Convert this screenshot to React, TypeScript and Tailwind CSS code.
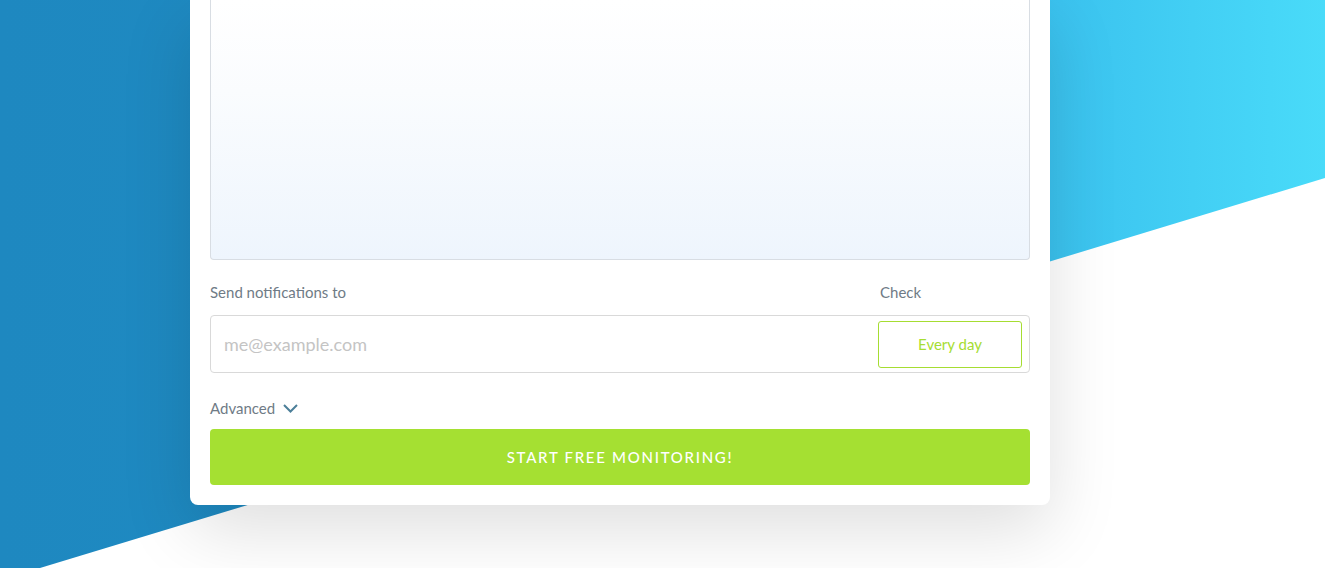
import React from "react";

export default function App() {
  return (
    <div className="relative h-[568px] w-full overflow-hidden bg-white font-['Lato','Open_Sans',sans-serif]">
      <div className="absolute inset-0 bg-[linear-gradient(90deg,#1e88c0_0%,#1f8cc3_40%,#3bc3ef_80%,#49dbf9_100%)] [clip-path:polygon(0_0,100%_0,100%_178px,40px_568px,0_568px)]" />
      <div className="relative ml-[190px] w-[860px] rounded-b-[8px] bg-white px-5 pb-5 shadow-[0_25px_70px_rgba(0,0,0,0.13)]">
        <div className="h-[260px] rounded-b-[4px] border border-t-0 border-[#d8dde3] bg-[linear-gradient(180deg,#ffffff_0%,#fafcfe_35%,#eef5fd_100%)]" />
        <div className="mt-[22px] flex text-[15px] leading-[20px] text-[#6f7b86]">
          <div className="flex-1">Send notifications to</div>
          <div className="w-[150px]">Check</div>
        </div>
        <div className="mt-[13px] flex h-[58px] items-center rounded-[4px] border border-[#d9d9d9] pr-[7px] pl-[13px]">
          <div className="flex-1 text-[18px] text-[#c4c4c4]">me@example.com</div>
          <div className="flex h-[47px] w-[144px] items-center justify-center rounded-[3px] border border-[#a6dd32] text-[15px] text-[#a6dd32]">
            Every day
          </div>
        </div>
        <div className="mt-[25px] flex items-center gap-[8px] text-[15px] leading-[20px] text-[#6f7b86]">
          <span>Advanced</span>
          <svg width="15" height="9" viewBox="0 0 15 9" fill="none">
            <polyline points="1,1 7.5,7.5 14,1" stroke="#4c7f99" strokeWidth="2" />
          </svg>
        </div>
        <button className="mt-[11px] flex h-[56px] w-full items-center justify-center rounded-[4px] bg-[#a5e032] text-[15px] font-medium tracking-[1.7px] text-white">
          START FREE MONITORING!
        </button>
      </div>
    </div>
  );
}
